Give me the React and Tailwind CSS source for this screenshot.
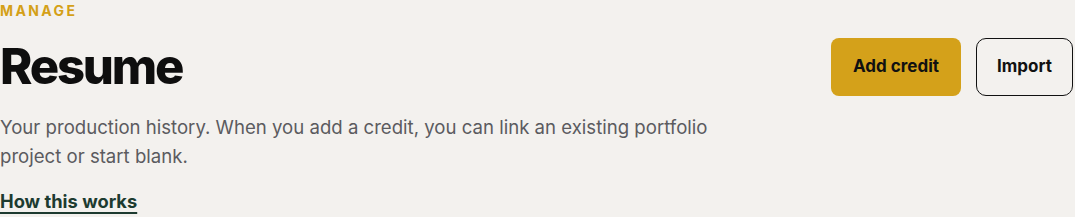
import React from 'react';

export default function App() {
  return (
    <div className="min-h-[217px] bg-[#f3f1ee] font-['Inter',sans-serif] overflow-hidden">
      <div className="flex items-start justify-between pr-[2px]">
        <div>
          <div className="text-[14px] leading-[24px] font-bold tracking-[0.17em] text-[#d4a017] -mt-[1px]">MANAGE</div>
          <h1 className="mt-[16px] text-[49px] leading-[56px] font-extrabold tracking-[-0.045em] text-[#0e0e0e]">Resume</h1>
          <p className="mt-[18px] max-w-[725px] text-[18.6px] leading-[29px] text-[#5b5b5f]">
            Your production history. When you add a credit, you can link an existing portfolio project or start blank.
          </p>
          <a href="#" className="mt-[18px] inline-block text-[18.3px] leading-[24px] font-bold text-[#1d3b30] underline underline-offset-[4px] decoration-[2px]">
            How this works
          </a>
        </div>
        <div className="mt-[38px] flex gap-[15px]">
          <button className="h-[58px] w-[130px] rounded-[8px] bg-[#d4a11a] text-[17px] font-bold text-[#111]">Add credit</button>
          <button className="h-[58px] w-[97px] rounded-[10px] border border-[#111] text-[17px] font-bold text-[#111]">Import</button>
        </div>
      </div>
    </div>
  );
}
